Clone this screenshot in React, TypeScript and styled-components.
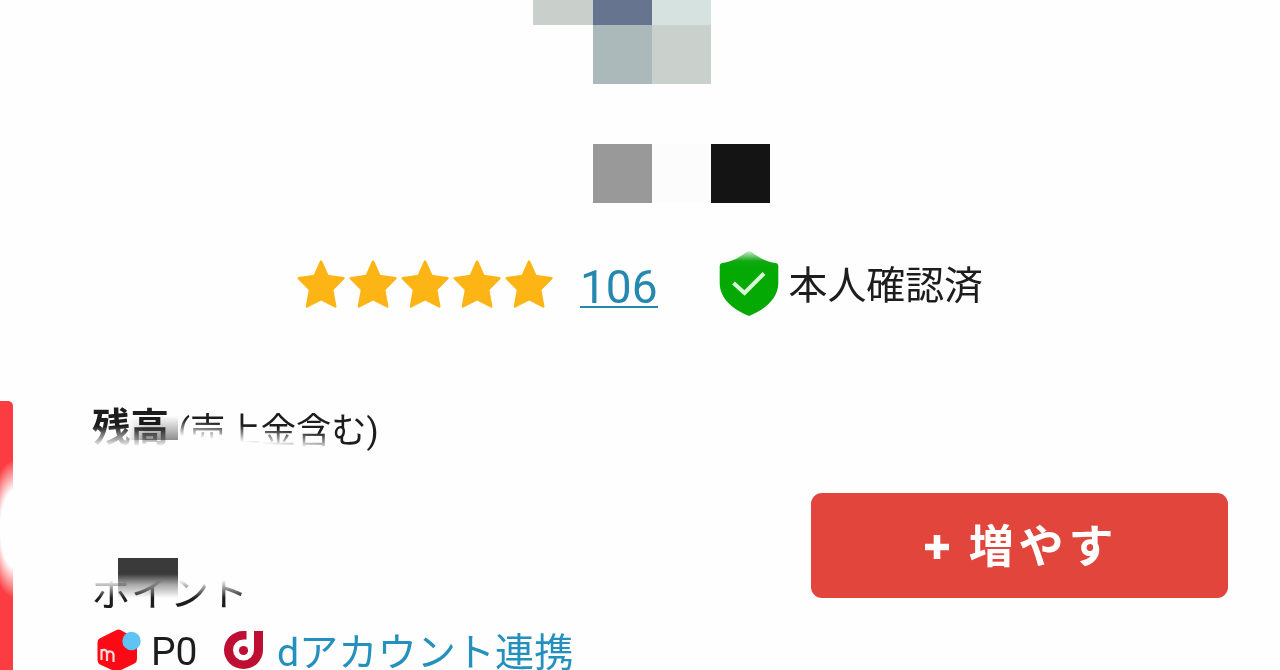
import * as React from "react";
import styled, { createGlobalStyle } from "styled-components";

const STARS = [1, 2, 3, 4, 5];

const AVATAR_TOP = ["#c9d0cc", "#66748f", "#d5e2df"];
const AVATAR_BOTTOM = ["transparent", "#abb9bb", "#cad0cc"];
const NAME_CELLS = ["#fefefe", "#999999", "#fcfcfc", "#141414"];

const App = () => {
  return (
    <>
      <GlobalStyle />
      <Page>
        <Mosaic>
          <MosaicRow $height={25}>
            {AVATAR_TOP.map((color) => (
              <Cell key={color} $color={color} />
            ))}
          </MosaicRow>
          <MosaicRow $height={59.3}>
            {AVATAR_BOTTOM.map((color) => (
              <Cell key={color} $color={color} />
            ))}
          </MosaicRow>
          <NameRow $height={59.3}>
            {NAME_CELLS.map((color) => (
              <Cell key={color} $color={color} />
            ))}
          </NameRow>
        </Mosaic>

        <Rating>
          <Stars>
            {STARS.map((star) => (
              <StarIcon key={star} />
            ))}
          </Stars>
          <ReviewLink href="#">106</ReviewLink>
          <Verified>
            <ShieldIcon />
            <span>本人確認済</span>
          </Verified>
        </Rating>

        <Wallet>
          <SideCard />
          <Balance>
            <BalanceTitle>
              <strong>残高</strong>
              <span>(売上金含む)</span>
            </BalanceTitle>
            <PointTitle>ポイント</PointTitle>
            <Points>
              <MercariIcon />
              <PointValue>P0</PointValue>
              <DpointIcon />
              <AccountLink href="#">dアカウント連携</AccountLink>
            </Points>
            <TopPatch />
            <BottomPatch />
          </Balance>
          <AddButton>
            <PlusIcon />
            <span>増やす</span>
          </AddButton>
        </Wallet>
      </Page>
    </>
  );
};

export default App;

const StarIcon = () => (
  <svg width="52.2" height="52" viewBox="0 0 52.2 52">
    <path
      d="M26.1 3.5 L32.6 18 L48.5 20.2 L37.2 31.6 L40.3 48.5 L26.1 41.2 L11.9 48.5 L15 31.6 L3.7 20.2 L19.6 18 Z"
      fill="#fdb415"
      stroke="#fdb415"
      strokeWidth="2.4"
      strokeLinejoin="round"
    />
  </svg>
);

const ShieldIcon = () => (
  <svg width="60" height="66" viewBox="0 0 60 66">
    <defs>
      <linearGradient id="shield" x1="0" y1="0" x2="0" y2="1">
        <stop offset="0" stopColor="#c5eac5" />
        <stop offset="0.15" stopColor="#12a812" />
        <stop offset="0.25" stopColor="#04a904" />
        <stop offset="1" stopColor="#04a904" />
      </linearGradient>
    </defs>
    <path
      d="M27 1.2 Q30 -0.5 33 1.2 C39 6 47 11 57 12 Q59.3 12.3 59.3 15 V32 C59.3 48 45 59 30 65 C15 59 0.7 48 0.7 32 V15 Q0.7 12.3 3 12 C13 11 21 6 27 1.2 Z"
      fill="url(#shield)"
    />
    <path d="M14.5 32 L25.5 42 L45 22.5" fill="none" stroke="#d9f7d6" strokeWidth="4" />
  </svg>
);

const MercariIcon = () => (
  <svg width="46" height="44" viewBox="0 0 46 44">
    <path
      d="M20.5 2 Q22.5 0.8 24.5 2 L39 10 Q41 11.5 41 14 V31 Q41 34 38.5 35.5 L23 43 Q20 44 17.5 42.7 L4 36.5 Q1.5 35 1.5 32 V14 Q1.5 11.5 4 10.3 Z"
      fill="#fb0914"
    />
    <path
      d="M5.5 32 V21 M5.5 24 C6.5 20.5 11 21.5 11 25.5 V33 M11 26 C12 22 17.5 23 17.5 27 V34"
      fill="none"
      stroke="#ffd9d9"
      strokeWidth="2.2"
    />
    <circle cx="35.5" cy="13" r="9.2" fill="#5fc3f4" />
  </svg>
);

const DpointIcon = () => (
  <svg width="40" height="40" viewBox="0 0 40 40">
    <path
      d="M22.5 1 V9.5 H19.5 A10.5 10.5 0 1 0 30 20 V1 H39 V20 A19.5 19 0 1 1 19.5 1 Z"
      fill="#be0f32"
    />
    <circle cx="19.5" cy="20.5" r="4.6" fill="#be0f32" />
  </svg>
);

const PlusIcon = () => (
  <svg width="24" height="24" viewBox="0 0 24 24">
    <path d="M12 0 V24 M0 12 H24" stroke="#fff" strokeWidth="6.6" />
  </svg>
);

const GlobalStyle = createGlobalStyle`
  body {
    margin: 0;
    background: #fefefe;
  }

  svg {
    display: block;
    flex-shrink: 0;
  }
`;

const Page = styled.main`
  width: 1280px;
  height: 670px;
  overflow: hidden;
  display: flex;
  flex-direction: column;
  color: #1d1d1d;
  font-family: Roboto, "Noto Sans CJK JP", sans-serif;
`;

const Mosaic = styled.div`
  padding-left: 533.4px;
`;

const MosaicRow = styled.div<{ $height: number }>`
  display: flex;
  height: ${(props) => props.$height}px;
`;

const NameRow = styled(MosaicRow)`
  margin-top: 59.3px;
`;

const Cell = styled.div<{ $color: string }>`
  width: 59.2px;
  background: ${(props) => props.$color};
`;

const Rating = styled.section`
  display: flex;
  align-items: center;
  height: 66px;
  margin-top: 48px;
  padding-left: 294.5px;
`;

const Stars = styled.div`
  display: flex;
`;

const ReviewLink = styled.a`
  display: flex;
  align-items: center;
  box-sizing: border-box;
  height: 46px;
  margin: 3px 0 0 24.5px;
  padding-top: 5px;
  border-bottom: 2.5px solid #2488b0;
  color: #2488b0;
  font-size: 46px;
  line-height: 40px;
  text-decoration: none;
`;

const Verified = styled.div`
  display: flex;
  align-items: center;
  gap: 10px;
  margin-left: 61px;
  font-size: 38.9px;
  line-height: 62px;

  span {
    padding-top: 4px;
  }
`;

const Wallet = styled.section`
  display: flex;
  height: 269px;
  margin-top: 84px;
`;

const SideCard = styled.div`
  width: 13px;
  border-radius: 0 5px 0 0;
  background: radial-gradient(ellipse 28px 70px at -4px 128px, rgba(254, 254, 254, 0), rgba(254, 254, 254, 0)),
    radial-gradient(ellipse 28px 70px at 16px 128px, #fefefe 56%, rgba(254, 254, 254, 0) 100%), #fb3c40;
`;

const Balance = styled.div`
  position: relative;
  width: 719px;
  margin-left: 79px;
`;

// the lower edge of the title is rubbed out, less so towards the right
const BalanceTitle = styled.div`
  display: flex;
  align-items: center;
  height: 56px;
  white-space: nowrap;

  strong {
    padding-bottom: 2px;
    font-size: 38.5px;
    font-weight: 700;
    line-height: 44px;
    mask-image: linear-gradient(#000 20px, transparent 41px);
  }

  span {
    margin-left: 9px;
    padding-top: 5px;
    font-size: 35.3px;
    line-height: 50px;
    mask-image: linear-gradient(185.5deg, #000 37px, transparent 54px),
      linear-gradient(90deg, transparent 76%, #000 79%);
  }
`;

const PointTitle = styled.div`
  height: 56px;
  margin: 108px 0 7px;
  font-size: 39px;
  line-height: 56px;
  mask-image: linear-gradient(transparent 15px, #000 33px);
`;

const Points = styled.div`
  display: flex;
  align-items: center;
  height: 44px;
  padding-left: 4px;
  line-height: 38px;
  white-space: nowrap;
`;

const PointValue = styled.span`
  width: 73px;
  margin-left: 9px;
  padding-top: 5px;
  font-size: 39px;
`;

const AccountLink = styled.a`
  margin-left: 13px;
  padding-top: 6px;
  color: #2490bd;
  font-size: 39.2px;
  text-decoration: none;
`;

const TopPatch = styled.div`
  position: absolute;
  top: 15px;
  left: 36px;
  width: 50px;
  height: 24px;
  background: linear-gradient(90deg, #fefefe, rgba(254, 254, 254, 0) 35%),
    linear-gradient(#fefefe, #8f8f8f);
  mix-blend-mode: multiply;
`;

const BottomPatch = styled.div`
  position: absolute;
  top: 157px;
  left: 26px;
  width: 59.5px;
  height: 40px;
  background: linear-gradient(#3a3a3a 40%, #aaa 67%, #fefefe);
  mix-blend-mode: multiply;
`;

const AddButton = styled.button`
  display: flex;
  align-items: center;
  justify-content: center;
  gap: 20px;
  width: 417px;
  height: 105px;
  margin: 92px 0 0;
  padding: 0 0 4px 4px;
  border: 0;
  border-radius: 11px;
  background: #e1453b;
  color: #fff;
  font-family: "Noto Sans CJK JP", sans-serif;
  font-size: 45px;
  font-weight: 700;
  letter-spacing: 4.9px;

  svg {
    margin-top: 8px;
  }
`;
